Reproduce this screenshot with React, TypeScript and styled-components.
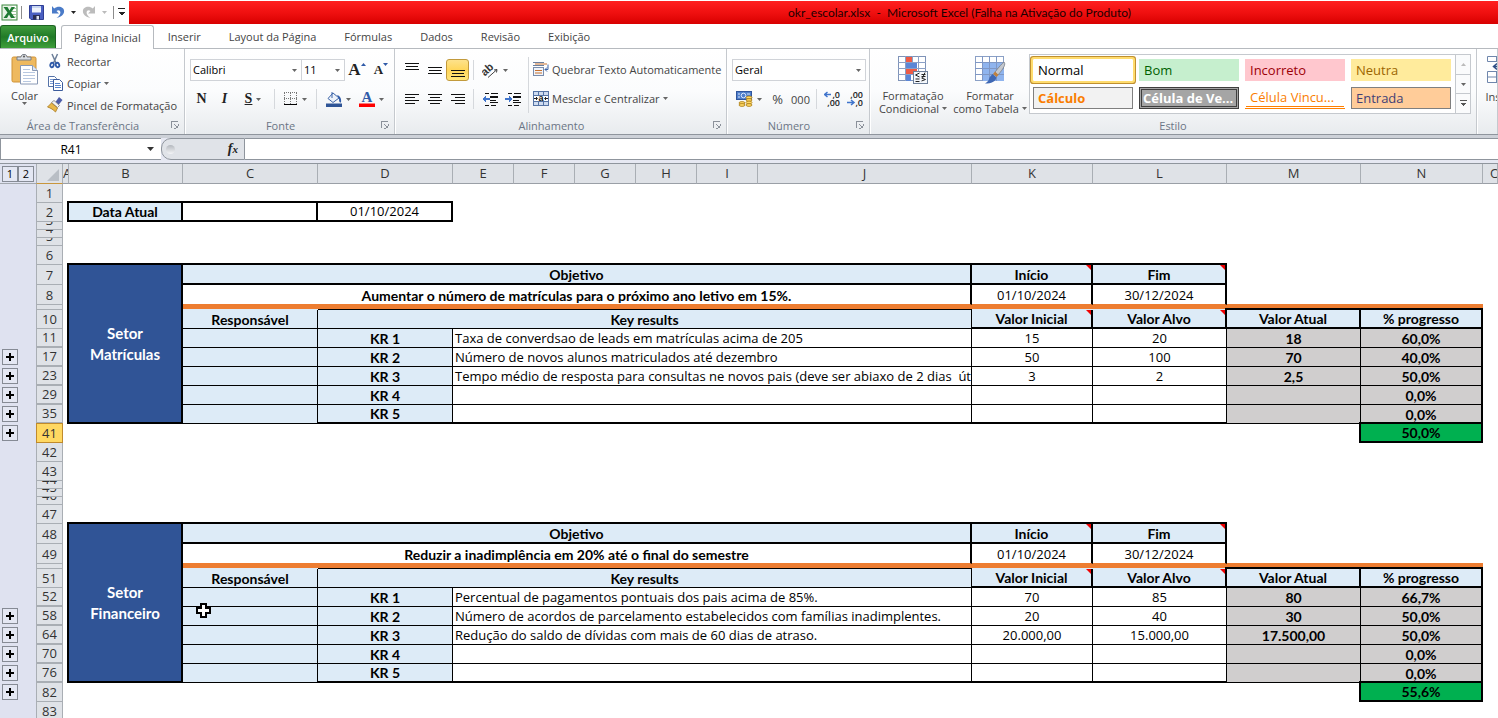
import React from 'react';
import styled, { createGlobalStyle, css } from 'styled-components';

const GlobalStyle = createGlobalStyle`
  *, *::before, *::after { box-sizing: border-box; }
  body { margin: 0; background: #fff; font-family: "Open Sans", "Noto Sans", sans-serif; font-size: 11px; color: #444; overflow: hidden; }
  button, select, input { font: inherit; color: inherit; }
  svg { display: block; flex: none; }
`;

const ink = '#000';
const blueFill = '#ddebf7';
const greyFill = '#d0cece';
const orange = '#ed7d31';
const line = '#8f959d';

/* ---------- window frame ---------- */

const Window = styled.div`
  display: flex;
  flex-direction: column;
  height: 100vh;
  overflow: hidden;
`;

const TitleRow = styled.header`
  display: flex;
  height: 24px;
  margin-bottom: 1px;
`;

const QuickAccess = styled.div`
  display: flex;
  align-items: center;
  width: 129px;
  padding-left: 1px;
  flex: none;
`;

const QuickButton = styled.button<{ $w: number }>`
  display: flex;
  align-items: center;
  justify-content: center;
  width: ${(p) => p.$w}px;
  height: 20px;
  padding: 0;
  border: 0;
  background: none;
`;

const QuickDivider = styled.span`
  width: 1px;
  height: 13px;
  margin: 0 3px;
  background: #8c8c8c;
`;

const TitleBar = styled.h1`
  flex: 1;
  margin: 1px 0 0;
  padding-left: 292px;
  background: linear-gradient(#ff2020, #f01010 50%, #d80000);
  color: #1c0000;
  font: 400 12px/23px Lato, "Open Sans", sans-serif;
  text-align: center;
  white-space: pre;
`;

const TabStrip = styled.nav`
  display: flex;
  height: 24px;
  border-bottom: 1px solid #b6babf;
`;

const FileTab = styled.button`
  width: 56px;
  height: 23px;
  margin-right: 5px;
  padding: 0;
  border: 1px solid #1d6423;
  border-bottom: 0;
  border-radius: 3px 3px 0 0;
  background: linear-gradient(#3f9a3c, #217a27 50%, #3fa03a);
  color: #fff;
  font-weight: 600;
`;

const Tab = styled.button<{ $active?: boolean }>`
  height: 23px;
  padding: 0 14px;
  border: 0;
  background: none;
  white-space: nowrap;
  ${(p) =>
    p.$active &&
    css`
      height: 24px;
      padding: 0 12px;
      border: 1px solid #b6babf;
      border-bottom: 0;
      border-radius: 3px 3px 0 0;
      background: #fff;
    `}
`;

/* ---------- ribbon ---------- */

const Ribbon = styled.section`
  display: flex;
  height: 86px;
  flex: none;
  border-bottom: 1px solid ${line};
  background: linear-gradient(#fff, #fbfcfd 50%, #e8ebee);
  overflow: hidden;
`;

const Group = styled.div<{ $w?: number }>`
  display: flex;
  flex-direction: column;
  flex: ${(p) => (p.$w ? 'none' : '1')};
  width: ${(p) => (p.$w ? `${p.$w}px` : 'auto')};
  border-right: 1px solid #c5c9ce;
  box-shadow: 1px 0 0 #fff;
  overflow: hidden;
`;

const GroupBody = styled.div`
  display: flex;
  flex: 1;
  padding: 2px 4px 0 5px;
`;

const GroupFooter = styled.div<{ $inset: number }>`
  display: flex;
  align-items: center;
  height: 17px;
  padding: 0 4px 1px ${(p) => p.$inset}px;
  color: #6b7585;
`;

const GroupName = styled.span`
  flex: 1;
  margin-right: 4px;
  text-align: center;
`;

const Launcher = styled.button`
  display: flex;
  width: 10px;
  height: 10px;
  padding: 1px;
  border: 0;
  background: none;
`;

const Stack = styled.div`
  display: flex;
  flex-direction: column;
`;

const Line = styled.div`
  display: flex;
  align-items: center;
  height: 22px;
`;

const BigButton = styled.button<{ $w: number; $top?: number }>`
  display: flex;
  flex-direction: column;
  align-items: center;
  width: ${(p) => p.$w}px;
  padding: ${(p) => p.$top ?? 3}px 0 0;
  border: 0;
  background: none;
  line-height: 13px;
  white-space: nowrap;
  flex: none;
`;

const BigLabel = styled.span`
  display: flex;
  flex-direction: column;
  align-items: center;
  margin-top: 4px;
`;

const LabelLine = styled.span`
  display: flex;
  align-items: center;
  gap: 3px;
`;

const TextButton = styled.button`
  display: flex;
  align-items: center;
  gap: 3px;
  height: 22px;
  padding: 0 0 2px;
  border: 0;
  background: none;
  white-space: nowrap;
`;

const IconButton = styled.button<{ $w?: number; $on?: boolean }>`
  display: flex;
  align-items: center;
  justify-content: center;
  gap: 4px;
  flex: none;
  width: ${(p) => p.$w ?? 23}px;
  height: 22px;
  padding: 0;
  border: 1px solid ${(p) => (p.$on ? '#c29a3c' : 'transparent')};
  border-radius: 3px;
  background: ${(p) => (p.$on ? 'linear-gradient(#fde28c, #ffd65a 50%, #ffe57a)' : 'none')};
`;

const Divider = styled.span<{ $tall?: boolean }>`
  width: 1px;
  height: ${(p) => (p.$tall ? 56 : 20)}px;
  flex: none;
  margin: ${(p) => (p.$tall ? 6 : 0)}px 4px 0;
  background: #d5d8dc;
`;

const ComboBox = styled.div<{ $w: number }>`
  display: flex;
  align-items: center;
  width: ${(p) => p.$w}px;
  height: 22px;
  padding-right: 4px;
  margin-right: -1px;
  border: 1px solid #d0d3d8;
  background: #fff;
`;

const ComboSelect = styled.select`
  flex: 1;
  min-width: 0;
  height: 20px;
  padding: 0 0 2px 2px;
  border: 0;
  appearance: none;
  background: none;
  color: #000;
`;

const Letter = styled.span<{ $s: number; $italic?: boolean; $under?: boolean }>`
  font: ${(p) => (p.$italic ? 'italic' : 'normal')} 700 ${(p) => p.$s}px/16px 'Liberation Serif', serif;
  text-decoration: ${(p) => (p.$under ? 'underline' : 'none')};
  color: #222;
`;

const SizeMark = styled.span`
  display: flex;
  align-self: flex-start;
  margin: 3px 0 0 -4px;
`;

const Percent = styled.span`
  font-size: 13px;
`;

/* ---------- style gallery ---------- */

const Gallery = styled.div`
  display: flex;
  width: 442px;
  height: 60px;
  margin-top: 3px;
  border: 1px solid #c5c9ce;
  background: #fff;
`;

const Swatches = styled.div`
  display: grid;
  grid-template-columns: repeat(4, 100px);
  grid-auto-rows: 22px;
  gap: 6px;
  padding: 4px 4px 4px 3px;
`;

const swatchLooks: Record<string, ReturnType<typeof css>> = {
  normal: css`background: #fff; color: #000; border-color: #fff; border-radius: 1px; box-shadow: 0 0 0 2px #ffdc6e, 0 0 0 3px #c09030;`,
  good: css`background: #c6efce; color: #006100;`,
  bad: css`background: #ffc7ce; color: #9c0006;`,
  neutral: css`background: #ffeb9c; color: #9c6500;`,
  calc: css`background: #f2f2f2; color: #fa7d00; border-color: #7f7f7f; font-weight: 700;`,
  check: css`background: #a5a5a5; color: #fff; border: 3px double #3f3f3f; font-weight: 700; padding: 0 1px; line-height: 14px;`,
  linked: css`background: #fff; color: #fa7d00; border-bottom: 3px double #ff8001;`,
  input: css`background: #ffcc99; color: #3f3f76; border-color: #7f7f7f;`,
};

const Swatch = styled.button<{ $kind: string }>`
  padding: 0 4px 1px;
  border: 1px solid transparent;
  font-size: 13px;
  line-height: 18px;
  text-align: left;
  white-space: nowrap;
  ${(p) => swatchLooks[p.$kind]}
`;

const GalleryScroll = styled.div`
  display: flex;
  flex-direction: column;
  width: 15px;
  margin-left: auto;
  border-left: 1px solid #c5c9ce;
`;

const ScrollButton = styled.button`
  display: flex;
  flex: 1;
  align-items: center;
  justify-content: center;
  padding: 0;
  border: 0;
  background: #fafbfc;
  & + & { border-top: 1px solid #c5c9ce; }
`;

/* ---------- formula bar ---------- */

const FormulaRow = styled.div`
  display: flex;
  height: 29px;
  flex: none;
  padding: 3px 0;
  background: linear-gradient(#cdd1d8 3px, #e6e8f2 3px);
  border-bottom: 1px solid ${line};
`;

const NameBox = styled.div`
  display: flex;
  align-items: center;
  width: 161px;
  padding: 0 7px 0 0;
  border: 1px solid ${line};
  border-right: 0;
  background: #fff;
`;

const NameInput = styled.input`
  flex: 1;
  min-width: 0;
  height: 18px;
  padding: 0 6px 0 0;
  border: 0;
  background: none;
  color: #000;
  font-size: 12px;
  text-align: center;
`;

const FxArea = styled.div`
  display: flex;
  align-items: center;
  justify-content: space-between;
  width: 84px;
  padding: 0 6px 0 4px;
  border: 1px solid ${line};
  border-radius: 10px 0 0 10px;
  background: #e0e3e8;
`;

const Knob = styled.span`
  width: 9px;
  height: 9px;
  border-radius: 50%;
  background: linear-gradient(#b4b8be, #f4f5f7);
`;

const FxButton = styled.button`
  padding: 0;
  border: 0;
  background: none;
  color: #222;
  font: italic 700 14px/18px 'Liberation Serif', serif;
`;

const FxSub = styled.span`
  font-size: 11px;
`;

const FormulaInput = styled.input`
  flex: 1;
  min-width: 0;
  border: solid ${line};
  border-width: 1px 0;
  background: #fff;
`;

/* ---------- sheet ---------- */

const Sheet = styled.main`
  position: relative;
  flex: 1;
  overflow: hidden;
  background: #fff;
`;

const Grid = styled.table`
  width: 100%;
  min-width: 1490px;
  table-layout: fixed;
  border-collapse: separate;
  border-spacing: 0;
  color: #000;
  font-size: 13px;
  line-height: 17px;
  td, th { padding: 0; }
`;

const GridRow = styled.tr<{ $h: number }>`
  height: ${(p) => p.$h}px;
`;

const Gutter = styled.td`
  background: #dfe2f0;
  vertical-align: top;
  line-height: 0;
`;

const OutlineButton = styled.button`
  display: block;
  width: 16px;
  height: 16px;
  margin: 1px 0 0 2px;
  padding: 0;
  border: 1px solid #868b95;
  background: #e4e7f3;
  line-height: 0;
`;

const Levels = styled.div`
  display: flex;
  height: 20px;
  padding-top: 1px;
  border-bottom: 1px solid #a3a8af;
  ${OutlineButton} { color: #000; font-size: 11px; line-height: 14px; }
  ${OutlineButton} + ${OutlineButton} { margin-left: 0; }
`;

const ColumnHead = styled.th<{ $cut?: boolean }>`
  border-right: 1px solid #a9aeb4;
  border-bottom: 1px solid #9a9fa6;
  background: #dfe2e7;
  color: #333;
  font-weight: 400;
  overflow: hidden;
  white-space: nowrap;
  ${(p) => p.$cut && css`text-align: left; text-indent: 7px;`}
`;

const Corner = styled.th`
  border: solid #a9aeb4;
  border-width: 0 1px;
  border-bottom: 1px solid #c8963c;
  background: #dfe2e7;
`;

const RowHead = styled.th<{ $on?: boolean; $hidden?: boolean }>`
  border: solid #a9aeb4;
  border-width: 0 1px ${(p) => (p.$hidden ? 2 : 1)}px 1px;
  background: #dfe2e7;
  color: #333;
  font-weight: 400;
  overflow: hidden;
  ${(p) =>
    p.$on &&
    css`
      background: #ffd862;
      border-color: #c08a2c;
      box-shadow: 0 -1px 0 #c08a2c;
    `}
`;

const RowNumber = styled.div<{ $h: number }>`
  display: flex;
  align-items: flex-end;
  justify-content: center;
  height: ${(p) => p.$h}px;
  overflow: hidden;
`;

type CellProps = {
  $fill?: string;
  $r?: number;
  $b?: number;
  $line?: string;
  $bold?: boolean;
  $left?: boolean;
  $frame?: 'top' | 'corner';
};

const frames = {
  corner: `-2px -2px 0 ${ink}, 0 -2px 0 ${ink}, -2px 0 0 ${ink}`,
  top: `0 -2px 0 ${ink}`,
};

const Cell = styled.td<CellProps>`
  position: relative;
  background: ${(p) => p.$fill ?? 'transparent'};
  border: 0 solid ${ink};
  border-right-width: ${(p) => p.$r ?? 0}px;
  border-bottom: ${(p) => p.$b ?? 0}px solid ${(p) => p.$line ?? ink};
  box-shadow: ${(p) => (p.$frame ? frames[p.$frame] : 'none')};
  text-align: ${(p) => (p.$left ? 'left' : 'center')};
  text-indent: ${(p) => (p.$left ? 2 : 0)}px;
  vertical-align: bottom;
  white-space: pre;
  overflow: hidden;
  ${(p) => p.$bold && css`font: 700 14px/17px Lato, 'Open Sans', sans-serif;`}
`;

const NotedCell = styled(Cell)`
  &::after {
    content: '';
    position: absolute;
    top: 0;
    right: 0;
    border-bottom: 5px solid transparent;
    border-right: 5px solid #f00000;
  }
`;

const SectorCell = styled(Cell)`
  background: #305496;
  color: #fff;
  font: 700 15px/21px Lato, 'Open Sans', sans-serif;
  vertical-align: middle;
`;

const CrossCursor = styled.svg`
  position: absolute;
  left: 196px;
  top: 439px;
`;

/* ---------- icons ---------- */

const Caret = ({ color = '#666', w = 5 }: { color?: string; w?: number }) => (
  <svg width={w} height={w > 5 ? 4 : 3} viewBox="0 0 5 3" preserveAspectRatio="none"><path d="M0 0h5L2.5 3z" fill={color} /></svg>
);

const ExcelIcon = () => (
  <svg width="17" height="17" viewBox="0 0 17 17">
    <rect x="1" y="1" width="15" height="15" fill="#e8f3e6" stroke="#3f8a41" />
    <path d="M11 2h4v13h-4z" fill="#fff" />
    <path d="M11 4.500h4M11 7.500h4M11 10.500h4M11 13h4" stroke="#9cc79a" />
    <path d="M2.500 3h4l2 3.500L10.500 3H14L10 8.500 14 14h-4L8 10.500 6 14H2.500L6.500 8.500z" fill="#1f7a33" />
  </svg>
);

const SaveIcon = () => (
  <svg width="15" height="15" viewBox="0 0 15 15">
    <path d="M.5.500h14v14H2L.5 13z" fill="#4a5fc1" stroke="#2f3e94" />
    <path d="M3 1h9v6.500H3z" fill="#eef2fb" />
    <path d="M3 1h9v2H3z" fill="#c7d5f0" />
    <path d="M4 10h7v4.500H4z" fill="#2b2f55" />
    <path d="M7.500 11h2.500v3.500H7.500z" fill="#dfe4f2" />
  </svg>
);

const UndoIcon = ({ color = '#4a7bc8', flip = false }: { color?: string; flip?: boolean }) => (
  <svg width="14" height="14" viewBox="0 0 14 14">
    <g transform={flip ? 'translate(14 0) scale(-1 1)' : undefined}>
      <path d="M1 1v7.500h7L5.500 6C7 4.600 9.200 5 9.400 7.200c.1 2-1.400 4-3.900 5.800 4.700-1 7.600-3.300 7.600-6.700C13.100 1.800 7 .300 3.200 3.600z" fill={color} />
    </g>
  </svg>
);

const QuickMenuIcon = () => (
  <svg width="7" height="8" viewBox="0 0 7 8" shapeRendering="crispEdges"><path d="M0 0h7v1H0z" fill="#222" /><path d="M0 4h7L3.500 7.500z" fill="#222" /></svg>
);

const PasteIcon = () => (
  <svg width="28" height="31" viewBox="0 0 28 31">
    <rect x="1" y="3" width="24" height="25" rx="1.500" fill="#eeb95f" stroke="#cf9236" />
    <path d="M6 6V3h4c0-3.500 6-3.500 6 0h4v3z" fill="#d9dde2" stroke="#777d85" />
    <circle cx="13" cy="2.500" r="1" fill="#555" />
    <path d="M9.500 11.500h12l5 5v13.500h-17z" fill="#fff" stroke="#8898b4" />
    <path d="M21.500 11.500v5h5" fill="#dbe5f4" stroke="#8898b4" />
    <path d="M12 15.500h7M12 18.500h12M12 21.500h12M12 24.500h12M12 27.500h8" stroke="#b8c8e0" />
  </svg>
);

const CutIcon = () => (
  <svg width="16" height="16" viewBox="0 0 16 16" fill="none">
    <path d="M5 1l4 9M10.500 1L6.500 10" stroke="#6d7f99" strokeWidth="1.500" />
    <ellipse cx="5" cy="12" rx="1.700" ry="2.300" stroke="#2f5aa8" strokeWidth="1.800" transform="rotate(20 5 12)" />
    <ellipse cx="10.500" cy="12" rx="1.700" ry="2.300" stroke="#2f5aa8" strokeWidth="1.800" transform="rotate(-20 10.500 12)" />
  </svg>
);

const CopyIcon = () => (
  <svg width="16" height="16" viewBox="0 0 16 16">
    <path d="M1.500 1.500h6l2 2v8h-8z" fill="#fff" stroke="#5472a8" />
    <path d="M3 4.500h4M3 6.500h4M3 8.500h4" stroke="#7a9cd4" />
    <path d="M6.500 4.500h6l3 3v8h-9z" fill="#fff" stroke="#3c5c9c" />
    <path d="M8 8.500h5M8 10.500h6M8 12.500h6" stroke="#5b86cc" />
  </svg>
);

const BrushIcon = () => (
  <svg width="17" height="16" viewBox="0 0 17 16">
    <path d="M12 0l3.500 3-4 5-3-3z" fill="#4d5da8" />
    <path d="M7 3.500l5.500 5-2 2-6-5z" fill="#f4f4f4" stroke="#7d7d7d" strokeWidth=".8" />
    <path d="M4.500 6l6 5-2 4c-2-2-4.500-4-8-5z" fill="#e8b84a" stroke="#a87a22" strokeWidth=".8" />
  </svg>
);

const LauncherIcon = () => (
  <svg width="8" height="8" viewBox="0 0 8 8" shapeRendering="crispEdges">
    <path d="M0 0h7v1H1v6H0zM3 3h1v1H3zM4 4h1v1H4zM7 3v4H3v1h5V3zM5 5h3v3H5z" fill="#8b919a" />
  </svg>
);

const BordersIcon = () => (
  <svg width="14" height="14" viewBox="0 0 14 14" shapeRendering="crispEdges">
    <path d="M.5 1v11M6.500 1v11M12.500 1v11M0 .500h13M0 6.500h13" stroke="#777" strokeDasharray="1 1" />
    <path d="M0 12h13v1H0z" fill="#000" />
  </svg>
);

const FillIcon = () => (
  <svg width="16" height="17" viewBox="0 0 16 17">
    <path d="M7 2l6 5-6 4.500L2 7.500z" fill="#eef3fa" stroke="#3c64a8" />
    <path d="M6 1v6" stroke="#3c64a8" />
    <path d="M11 4c4 1 4.500 5 4 7.500-1.500.5-2-1-2-4z" fill="#2f5aa8" />
    <path d="M0 12.500h16v3.500H0z" fill="#2f5597" />
  </svg>
);

const FontColorIcon = () => (
  <svg width="16" height="17" viewBox="0 0 16 17">
    <text x="8" y="11" textAnchor="middle" fontFamily="Liberation Serif" fontSize="15" fontWeight="700" fill="#2f5aa8">A</text>
    <path d="M0 12.500h16v3.500H0z" fill="#f00" />
  </svg>
);

const lineSets: Record<string, [number, number, number][]> = {
  top: [[0, 0, 14], [1, 3, 12], [0, 6, 14]],
  middle: [[0, 4, 14], [1, 7, 12], [0, 10, 14]],
  bottom: [[0, 7, 14], [1, 10, 12], [0, 13, 14]],
  left: [[0, 2, 14], [0, 5, 10], [0, 8, 14], [0, 11, 10]],
  center: [[0, 2, 14], [2, 5, 10], [0, 8, 14], [2, 11, 10]],
  right: [[0, 2, 14], [4, 5, 10], [0, 8, 14], [4, 11, 10]],
};

const LinesIcon = ({ kind }: { kind: string }) => (
  <svg width="14" height="14" viewBox="0 0 14 14" shapeRendering="crispEdges">
    {lineSets[kind].map(([x, y, w]) => <rect key={y} x={x} y={y} width={w} height="1" fill="#111" />)}
  </svg>
);

const OrientationIcon = () => (
  <svg width="17" height="17" viewBox="0 0 17 17">
    <text x="1" y="12" fontSize="11" fontWeight="700" fontFamily="Liberation Sans" fill="#333" transform="rotate(-42 5 11)">ab</text>
    <path d="M6 15.500l9-8M15 7.500l-3 .5M15 7.500l-.5 3" stroke="#444" fill="none" />
  </svg>
);

const IndentIcon = ({ inward = false }: { inward?: boolean }) => (
  <svg width="16" height="14" viewBox="0 0 16 14" shapeRendering="crispEdges">
    <path d="M3 1h4v1H3zM9 1h7v1H9zM8 4h8v2H8zM8 8h6v1H8zM8 10h8v1H8zM3 13h4v1H3zM9 13h5v1H9z" fill="#111" />
    <path d={inward ? 'M0 6h4V3l3.500 4L4 11V8H0z' : 'M7.500 6H4V3L0 7l4 4V8h3.500z'} fill="#3f74cc" />
  </svg>
);

const WrapIcon = () => (
  <svg width="16" height="16" viewBox="0 0 16 16">
    <path d="M0 1.500h11M0 4.500h11" stroke="#6b7f9e" />
    <path d="M2 3h12" stroke="#c8702c" />
    <rect x=".5" y="6.500" width="10" height="8" fill="#f1f5fb" stroke="#7a8dac" />
    <path d="M2 9.500h7M2 12h7" stroke="#c8702c" />
    <path d="M15 3.500v5h-3M14 6.500l-2 2 2 2" stroke="#3c64a8" fill="none" />
  </svg>
);

const MergeIcon = () => (
  <svg width="16" height="15" viewBox="0 0 16 15">
    <rect x=".5" y=".5" width="15" height="14" fill="#cfdcf0" stroke="#5573a4" />
    <path d="M5.500 0v4M10.500 0v4M5.500 11v4M10.500 11v4M0 4.500h16M0 10.500h16" stroke="#5573a4" />
    <path d="M1 5h14v5H1z" fill="#fff" />
    <path d="M1 7.500h3M15 7.500h-3M3 6l1.500 1.500L3 9M13 6l-1.500 1.500L13 9" stroke="#222" fill="none" />
    <text x="5.500" y="10" fontSize="9" fontWeight="700" fontFamily="Liberation Sans" fill="#111">a</text>
  </svg>
);

const coins: [number, number][] = [[13, 6.5], [13, 9], [13, 11.5], [13, 14], [6, 12], [6, 14]];

const CurrencyIcon = () => (
  <svg width="17" height="16" viewBox="0 0 17 16">
    <rect x=".5" y=".5" width="15" height="8" fill="#4f7fcb" stroke="#2f559c" />
    <circle cx="7.500" cy="4.500" r="2.300" fill="none" stroke="#dbe7fa" />
    <path d="M2 3h2M2 6h2M11 3h3" stroke="#dbe7fa" />
    {coins.map(([x, y]) => <ellipse key={`${x}-${y}`} cx={x} cy={y} rx="3" ry="1.400" fill="#ffd966" stroke="#a87a12" strokeWidth=".8" />)}
  </svg>
);

const DecimalIcon = ({ fewer = false }: { fewer?: boolean }) => (
  <svg width="17" height="18" viewBox="0 0 17 18" fontFamily="Open Sans" fontSize="9" fontWeight="600" fill="#222">
    <text x="16" y="8" textAnchor="end">{fewer ? ',00' : ',0'}</text>
    <text x="16" y="16" textAnchor="end">{fewer ? ',0' : ',00'}</text>
    <path d={fewer ? 'M0 12.500h6M4 10l3 2.500L4 15' : 'M7 4.500H1M3.500 2L.5 4.500l3 2.500'} stroke="#3f74cc" strokeWidth="1.500" fill="none" />
  </svg>
);

const ConditionalIcon = () => (
  <svg width="31" height="29" viewBox="0 0 31 29">
    <rect x=".5" y=".5" width="27" height="24" fill="#fff" stroke="#7f93b8" />
    <path d="M7 1h7v6H7zM7 13h12v6H7z" fill="#ee5a45" />
    <path d="M7 7h12v6H7zM7 19h6v6H7z" fill="#5b86d6" />
    <path d="M7.500 0v25M14.500 0v7M20.500 0v25M0 6.500h28M0 12.500h28M0 18.500h28" stroke="#8ba0c6" />
    <rect x="15.500" y="15.500" width="14" height="12" fill="#f4f7fb" stroke="#6d7f99" />
    <path d="M21.500 17l-4 2 4 2M17.500 23h4M23.500 18.500h4M23.500 20.500h4M27 16.500l-2.500 5.500M23.500 22l4 1.500-4 1.500M17.500 25.500h4" stroke="#222" fill="none" />
  </svg>
);

const TableFormatIcon = () => (
  <svg width="31" height="29" viewBox="0 0 31 29">
    <rect x=".5" y=".5" width="28" height="24" fill="#fff" stroke="#8ba0c6" />
    <path d="M7 7h22v18H7z" fill="#8fb4ee" />
    <path d="M7.500 0v25M14.500 0v25M21.500 0v25M0 6.500h29M0 12.500h29M0 18.500h29" stroke="#7f97c4" />
    <path d="M29 6c2 2 0 6-6 13l-3-3c4-5 7-8.500 9-10z" fill="#c4c8ce" stroke="#7a7f86" strokeWidth=".8" />
    <path d="M20 15.500l3.500 3.500-2 2-3.500-3z" fill="#c0813e" />
    <path d="M17.500 18l4 3.500c-1 4-5 6-11.500 6 3.500-2 4-4 4.500-6z" fill="#3f68b4" />
  </svg>
);

const InsertCellsIcon = () => (
  <svg width="30" height="30" viewBox="0 0 30 30">
    <path d="M.5.500h29v5H.5zM.5 15.500h29v11H.5zM9.500.500v5M19.500.500v5M9.500 15.500v11M19.500 15.500v11M.5 21h29" fill="#fff" stroke="#6f86ac" />
    <path d="M16 10.500H7M10 7.500l-3.500 3 3.500 3" fill="none" stroke="#2f4f86" strokeWidth="1.500" />
  </svg>
);

const PlusIcon = () => (
  <svg width="14" height="14" viewBox="0 0 14 14" shapeRendering="crispEdges"><path d="M6 3h2v3h3v2H8v3H6V8H3V6h3z" fill="#000" /></svg>
);

/* ---------- ribbon groups ---------- */

const Footer = ({ name, launcher = true }: { name: string; launcher?: boolean }) => (
  <GroupFooter $inset={launcher ? 0 : 8}>
    <GroupName>{name}</GroupName>
    {launcher && <Launcher aria-label={`Opções de ${name}`}><LauncherIcon /></Launcher>}
  </GroupFooter>
);

const Combo = ({ label, value, w }: { label: string; value: string; w: number }) => (
  <ComboBox $w={w}>
    <ComboSelect aria-label={label} defaultValue={value}><option>{value}</option></ComboSelect>
    <Caret />
  </ComboBox>
);

const PasteBox = styled.div`
  width: 44px;
  margin-left: -2px;
  flex: none;
`;

const SmallIcon = styled.span`
  display: flex;
  width: 17px;
  flex: none;
`;

const ControlStack = styled(Stack)`
  padding-top: 8px;
  gap: 7px;
`;

const Clipboard = () => (
  <Group $w={185}>
    <GroupBody>
      <PasteBox>
        <BigButton $w={43}><PasteIcon /><BigLabel>Colar<LabelLine><Caret /></LabelLine></BigLabel></BigButton>
      </PasteBox>
      <Stack>
        <TextButton><SmallIcon><CutIcon /></SmallIcon>Recortar</TextButton>
        <TextButton><SmallIcon><CopyIcon /></SmallIcon>Copiar<Caret /></TextButton>
        <TextButton><SmallIcon><BrushIcon /></SmallIcon>Pincel de Formatação</TextButton>
      </Stack>
    </GroupBody>
    <Footer name="Área de Transferência" />
  </Group>
);

const FontGroup = () => (
  <Group $w={210}>
    <GroupBody>
      <ControlStack>
        <Line>
          <Combo label="Fonte" value="Calibri" w={112} />
          <Combo label="Tamanho da fonte" value="11" w={44} />
          <IconButton $w={26} aria-label="Aumentar fonte">
            <Letter $s={17}>A</Letter>
            <SizeMark><svg width="5" height="3"><path d="M0 3h5L2.500 0z" fill="#2f5aa8" /></svg></SizeMark>
          </IconButton>
          <IconButton $w={22} aria-label="Diminuir fonte">
            <Letter $s={13}>A</Letter>
            <SizeMark><Caret color="#2f5aa8" /></SizeMark>
          </IconButton>
        </Line>
        <Line>
          <IconButton aria-label="Negrito"><Letter $s={14}>N</Letter></IconButton>
          <IconButton aria-label="Itálico"><Letter $s={14} $italic>I</Letter></IconButton>
          <IconButton $w={34} aria-label="Sublinhado"><Letter $s={14} $under>S</Letter><Caret /></IconButton>
          <Divider />
          <IconButton $w={33} aria-label="Bordas"><BordersIcon /><Caret /></IconButton>
          <Divider />
          <IconButton $w={34} aria-label="Cor de preenchimento"><FillIcon /><Caret /></IconButton>
          <IconButton $w={33} aria-label="Cor da fonte"><FontColorIcon /><Caret /></IconButton>
        </Line>
      </ControlStack>
    </GroupBody>
    <Footer name="Fonte" />
  </Group>
);

const AlignGroup = () => (
  <Group $w={332}>
    <GroupBody>
      <ControlStack>
        <Line>
          {['top', 'middle', 'bottom'].map((k) => (
            <IconButton key={k} $on={k === 'bottom'} aria-label={`Alinhar ${k}`}><LinesIcon kind={k} /></IconButton>
          ))}
          <Divider />
          <IconButton $w={34} aria-label="Orientação"><OrientationIcon /><Caret /></IconButton>
        </Line>
        <Line>
          {['left', 'center', 'right'].map((k) => (
            <IconButton key={k} aria-label={`Alinhar texto ${k}`}><LinesIcon kind={k} /></IconButton>
          ))}
          <Divider />
          <IconButton aria-label="Diminuir recuo"><IndentIcon /></IconButton>
          <IconButton aria-label="Aumentar recuo"><IndentIcon inward /></IconButton>
        </Line>
      </ControlStack>
      <Divider $tall />
      <ControlStack>
        <TextButton><WrapIcon />Quebrar Texto Automaticamente</TextButton>
        <TextButton><MergeIcon />Mesclar e Centralizar<Caret /></TextButton>
      </ControlStack>
    </GroupBody>
    <Footer name="Alinhamento" />
  </Group>
);

const NumberGroup = () => (
  <Group $w={143}>
    <GroupBody>
      <ControlStack>
        <Combo label="Formato de número" value="Geral" w={134} />
        <Line>
          <IconButton $w={34} aria-label="Formato de contabilização"><CurrencyIcon /><Caret /></IconButton>
          <IconButton aria-label="Estilo de porcentagem"><Percent>%</Percent></IconButton>
          <IconButton>000</IconButton>
          <Divider />
          <IconButton aria-label="Aumentar casas decimais"><DecimalIcon /></IconButton>
          <IconButton aria-label="Diminuir casas decimais"><DecimalIcon fewer /></IconButton>
        </Line>
      </ControlStack>
    </GroupBody>
    <Footer name="Número" />
  </Group>
);

const swatches: [string, string][] = [
  ['normal', 'Normal'], ['good', 'Bom'], ['bad', 'Incorreto'], ['neutral', 'Neutra'],
  ['calc', 'Cálculo'], ['check', 'Célula de Ve...'], ['linked', 'Célula Vincu...'], ['input', 'Entrada'],
];

const StyleGroup = () => (
  <Group $w={607}>
    <GroupBody>
      <BigButton $w={76} $top={5}>
        <ConditionalIcon />
        <BigLabel>Formatação<LabelLine>Condicional<Caret /></LabelLine></BigLabel>
      </BigButton>
      <BigButton $w={78} $top={5}>
        <TableFormatIcon />
        <BigLabel>Formatar<LabelLine>como Tabela<Caret /></LabelLine></BigLabel>
      </BigButton>
      <Gallery>
        <Swatches>
          {swatches.map(([kind, name]) => <Swatch key={kind} $kind={kind}>{name}</Swatch>)}
        </Swatches>
        <GalleryScroll>
          <ScrollButton aria-label="Anterior"><svg width="5" height="3"><path d="M0 3h5L2.500 0z" fill="#bbb" /></svg></ScrollButton>
          <ScrollButton aria-label="Próximo"><Caret /></ScrollButton>
          <ScrollButton aria-label="Mais estilos"><svg width="7" height="7" shapeRendering="crispEdges"><path d="M0 0h7v1H0zM1 3h5L3.500 6z" fill="#555" /></svg></ScrollButton>
        </GalleryScroll>
      </Gallery>
    </GroupBody>
    <Footer name="Estilo" launcher={false} />
  </Group>
);

const CellsGroup = () => (
  <Group>
    <GroupBody>
      <BigButton $w={40} $top={5}><InsertCellsIcon /><BigLabel>Inserir</BigLabel></BigButton>
    </GroupBody>
  </Group>
);

/* ---------- sheet content ---------- */

const columns: [string, number][] = [
  ['A', 6], ['B', 114], ['C', 135], ['D', 135], ['E', 61], ['F', 61], ['G', 61], ['H', 61],
  ['I', 61], ['J', 214], ['K', 121], ['L', 134], ['M', 134], ['N', 122],
];

type RowProps = { n: number | ''; h?: number; plus?: boolean; on?: boolean; hidden?: boolean; children?: React.ReactNode };

const Row = ({ n, h = 19, plus, on, hidden, children }: RowProps) => (
  <GridRow $h={h}>
    <Gutter>{plus && <OutlineButton aria-label={`Expandir linha ${n}`}><PlusIcon /></OutlineButton>}</Gutter>
    <RowHead scope="row" $on={on} $hidden={hidden}><RowNumber $h={hidden ? h - 2 : h - 1}>{n}</RowNumber></RowHead>
    <td />
    {children}
  </GridRow>
);

type Result = { text: string; start: string; target: string; now: string; pct: string };
type Block = { sector: string[]; goal: string; rows: number[]; results: Result[]; total: string };

const OkrBlock = ({ sector, goal, rows, results, total }: Block) => (
  <>
    <Row n={rows[0]} h={20}>
      <SectorCell rowSpan={9} $r={2} $b={2} $frame="corner">{sector.join('\n')}</SectorCell>
      <Cell as="th" colSpan={8} $fill={blueFill} $r={2} $b={2} $bold $frame="top">Objetivo</Cell>
      <NotedCell as="th" $fill={blueFill} $r={2} $b={2} $bold $frame="top">Início</NotedCell>
      <NotedCell as="th" $fill={blueFill} $r={2} $b={2} $bold $frame="top">Fim</NotedCell>
    </Row>
    <Row n={rows[0] + 1} h={20}>
      <Cell colSpan={8} $r={2} $b={1} $line={orange} $bold>{goal}</Cell>
      <Cell $r={2} $b={1} $line={orange}>01/10/2024</Cell>
      <Cell $r={2} $b={1} $line={orange}>30/12/2024</Cell>
      <Cell colSpan={2} $b={1} $line={orange} />
    </Row>
    <Row n="" h={5}>
      <Cell $fill={orange} $b={1} $line={blueFill} />
      <Cell colSpan={7} $fill={orange} $b={1} />
      <Cell colSpan={2} $fill={orange} $b={1} $line={blueFill} />
      <Cell colSpan={2} $fill={orange} />
    </Row>
    <Row n={rows[1]}>
      <Cell as="th" $fill={blueFill} $r={1} $b={1} $bold>Responsável</Cell>
      <Cell as="th" colSpan={7} $fill={blueFill} $r={1} $b={1} $bold>Key results</Cell>
      <NotedCell as="th" $fill={blueFill} $r={2} $b={2} $bold>Valor Inicial</NotedCell>
      <NotedCell as="th" $fill={blueFill} $r={2} $b={2} $bold>Valor Alvo</NotedCell>
      <Cell as="th" $fill={blueFill} $r={2} $b={2} $bold $frame="corner">Valor Atual</Cell>
      <Cell as="th" $fill={blueFill} $r={2} $b={2} $bold $frame="top">% progresso</Cell>
    </Row>
    {results.map((r, i) => {
      const edge = i === results.length - 1 ? 2 : 1;
      return (
        <Row key={i} n={rows[i + 2]} plus={i > 0} hidden>
          <Cell $fill={blueFill} $r={1} $b={1} />
          <Cell $fill={blueFill} $r={1} $b={edge} $bold>{`KR ${i + 1}`}</Cell>
          <Cell colSpan={6} $r={1} $b={edge} $left>{r.text}</Cell>
          <Cell $r={1} $b={edge}>{r.start}</Cell>
          <Cell $r={1} $b={edge}>{r.target}</Cell>
          <Cell $fill={greyFill} $r={1} $b={1} $bold>{r.now}</Cell>
          <Cell $fill={greyFill} $r={2} $b={1} $bold>{r.pct}</Cell>
        </Row>
      );
    })}
    <Row n={rows[7]} plus on={rows[7] === 41}>
      <Cell colSpan={12} />
      <Cell $fill="#00b050" $r={2} $b={2} $bold $frame="corner">{total}</Cell>
    </Row>
  </>
);

const empty: Result = { text: '', start: '', target: '', now: '', pct: '0,0%' };

const enrolment: Block = {
  sector: ['Setor', 'Matrículas'],
  goal: 'Aumentar o número de matrículas para o próximo ano letivo em 15%.',
  rows: [7, 10, 11, 17, 23, 29, 35, 41],
  results: [
    { text: 'Taxa de converdsao de leads em matrículas acima de 205', start: '15', target: '20', now: '18', pct: '60,0%' },
    { text: 'Número de novos alunos matriculados até dezembro', start: '50', target: '100', now: '70', pct: '40,0%' },
    { text: 'Tempo médio de resposta para consultas ne novos pais (deve ser abiaxo de 2 dias  úteis)', start: '3', target: '2', now: '2,5', pct: '50,0%' },
    empty, empty,
  ],
  total: '50,0%',
};

const finance: Block = {
  sector: ['Setor', 'Financeiro'],
  goal: 'Reduzir a inadimplência em 20% até o final do semestre',
  rows: [48, 51, 52, 58, 64, 70, 76, 82],
  results: [
    { text: 'Percentual de pagamentos pontuais dos pais acima de 85%.', start: '70', target: '85', now: '80', pct: '66,7%' },
    { text: 'Número de acordos de parcelamento estabelecidos com famílias inadimplentes.', start: '20', target: '40', now: '30', pct: '50,0%' },
    { text: 'Redução do saldo de dívidas com mais de 60 dias de atraso.', start: '20.000,00', target: '15.000,00', now: '17.500,00', pct: '50,0%' },
    empty, empty,
  ],
  total: '55,6%',
};

export default function App() {
  return (
    <Window>
      <GlobalStyle />
      <TitleRow>
        <QuickAccess>
          <QuickButton $w={17} aria-label="Excel"><ExcelIcon /></QuickButton>
          <QuickDivider />
          <QuickButton $w={23} aria-label="Salvar"><SaveIcon /></QuickButton>
          <QuickButton $w={20} aria-label="Desfazer"><UndoIcon /></QuickButton>
          <QuickButton $w={11} aria-label="Lista de desfazer"><Caret color="#222" /></QuickButton>
          <QuickButton $w={20} aria-label="Refazer"><UndoIcon color="#bcbcbc" flip /></QuickButton>
          <QuickButton $w={11} aria-label="Lista de refazer"><Caret color="#bbb" /></QuickButton>
          <QuickDivider />
          <QuickButton $w={9} aria-label="Personalizar barra"><QuickMenuIcon /></QuickButton>
        </QuickAccess>
        <TitleBar>okr_escolar.xlsx  -  Microsoft Excel (Falha na Ativação do Produto)</TitleBar>
      </TitleRow>
      <TabStrip>
        <FileTab>Arquivo</FileTab>
        <Tab $active>Página Inicial</Tab>
        {['Inserir', 'Layout da Página', 'Fórmulas', 'Dados', 'Revisão', 'Exibição'].map((t) => <Tab key={t}>{t}</Tab>)}
      </TabStrip>
      <Ribbon>
        <Clipboard />
        <FontGroup />
        <AlignGroup />
        <NumberGroup />
        <StyleGroup />
        <CellsGroup />
      </Ribbon>
      <FormulaRow>
        <NameBox>
          <NameInput aria-label="Caixa de nome" defaultValue="R41" />
          <Caret color="#333" w={7} />
        </NameBox>
        <FxArea><Knob /><FxButton aria-label="Inserir função">f<FxSub>x</FxSub></FxButton></FxArea>
        <FormulaInput aria-label="Barra de fórmulas" />
      </FormulaRow>
      <Sheet>
        <Grid>
          <colgroup>
            <col width="36" />
            <col width="27" />
            {columns.map(([c, w]) => <col key={c} width={w} />)}
            <col />
          </colgroup>
          <thead>
            <GridRow $h={20}>
              <Gutter><Levels><OutlineButton>1</OutlineButton><OutlineButton>2</OutlineButton></Levels></Gutter>
              <Corner><svg width="24" height="17"><path d="M22 4v12H10z" fill="#b9bec5" /></svg></Corner>
              {columns.map(([c]) => <ColumnHead key={c} scope="col">{c}</ColumnHead>)}
              <ColumnHead scope="col" $cut>O</ColumnHead>
            </GridRow>
          </thead>
          <tbody>
            <Row n={1} />
            <Row n={2}>
              <Cell as="th" $fill={blueFill} $r={2} $b={2} $bold $frame="corner">Data Atual</Cell>
              <Cell $r={2} $b={2} $frame="top" />
              <Cell $r={2} $b={2} $frame="top">01/10/2024</Cell>
            </Row>
            <Row n={3} h={8} />
            <Row n={4} h={8} />
            <Row n={5} h={8} />
            <Row n={6} />
            <OkrBlock {...enrolment} />
            <Row n={42} />
            <Row n={43} />
            <Row n={44} h={8} />
            <Row n={45} h={8} />
            <Row n={46} h={8} />
            <Row n={47} />
            <OkrBlock {...finance} />
            <Row n={83} />
          </tbody>
        </Grid>
        <CrossCursor width="15" height="15" viewBox="0 0 15 15" shapeRendering="crispEdges">
          <path d="M5 1h5v4h4v5h-4v4H5v-4H1V5h4z" fill="#fff" stroke="#000" strokeWidth="1.500" />
        </CrossCursor>
      </Sheet>
    </Window>
  );
}
